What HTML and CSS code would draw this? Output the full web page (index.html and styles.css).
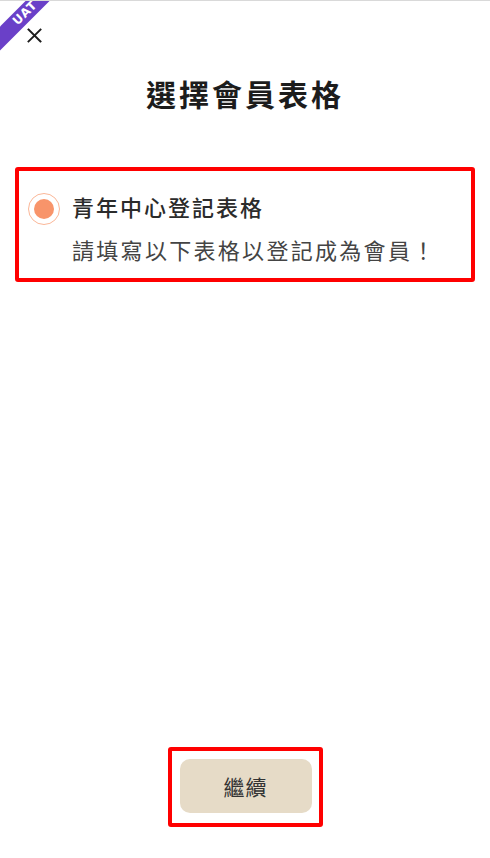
FILE: index.html
```html
<!DOCTYPE html>
<html lang="zh-Hant">
<head>
<meta charset="utf-8">
<title>選擇會員表格</title>
<link rel="stylesheet" href="styles.css">
</head>
<body>
<div class="page">
  <div class="ribbon"><span>UAT</span></div>
  <div class="topbar">
    <svg class="close" width="15" height="15" viewBox="0 0 15 15" aria-label="關閉">
      <path d="M1.5 1.5 L13.5 13.5 M13.5 1.5 L1.5 13.5" stroke="#1d1d1d" stroke-width="1.9" stroke-linecap="square" fill="none"/>
    </svg>
  </div>
  <h1 class="title">選擇會員表格</h1>
  <div class="card">
    <div class="option">
      <div class="radio"><div class="dot"></div></div>
      <div class="texts">
        <div class="opt-title">青年中心登記表格</div>
        <div class="opt-sub">請填寫以下表格以登記成為會員！</div>
      </div>
    </div>
  </div>
  <div class="spacer"></div>
  <div class="btn-wrap">
    <button class="btn">繼續</button>
  </div>
</div>
</body>
</html>
```

FILE: styles.css
```css
html, body {
  margin: 0;
  padding: 0;
  background: #fff;
}
body {
  font-family: "Noto Sans CJK TC", "Noto Sans", sans-serif;
  color: #222;
}
.page {
  position: relative;
  height: 858px;
  box-sizing: border-box;
  border-top: 1px solid #d9d9d9;
  display: flex;
  flex-direction: column;
  overflow: hidden;
}
.ribbon {
  position: absolute;
  left: -31px;
  top: 10px;
  width: 100px;
  height: 17px;
  background: #6a40c8;
  transform: rotate(-45deg);
  display: flex;
  align-items: center;
  justify-content: center;
  z-index: 2;
}
.ribbon span {
  color: #fff;
  font-family: "DejaVu Sans", sans-serif;
  font-weight: bold;
  font-size: 12px;
  line-height: 17px;
  letter-spacing: 1px;
  padding-left: 18px;
}
.topbar {
  height: 44px;
  padding: 27px 0 0 27px;
  box-sizing: border-box;
}
.close {
  display: block;
}
.title {
  margin: 28px 0 0;
  text-align: center;
  font-size: 30px;
  line-height: 40px;
  font-weight: 700;
  letter-spacing: 3px;
  color: #1c1c1c;
}
.card {
  margin: 54px 15px 0;
  border: 4px solid #ff0000;
  border-radius: 3px;
}
.option {
  display: flex;
  gap: 12px;
  padding: 20px 9px 14px;
}
.radio {
  margin-top: 2px;
  width: 32px;
  height: 32px;
  box-sizing: border-box;
  border: 1.5px solid #fbb798;
  border-radius: 50%;
  display: flex;
  align-items: center;
  justify-content: center;
  flex: none;
}
.dot {
  width: 20px;
  height: 20px;
  border-radius: 50%;
  background: #f8946a;
}
.texts {
  display: flex;
  flex-direction: column;
  gap: 13px;
}
.opt-title {
  font-size: 22px;
  line-height: 30px;
  font-weight: 500;
  letter-spacing: 2px;
  color: #2b2b2b;
}
.opt-sub {
  font-size: 22px;
  line-height: 30px;
  font-weight: 400;
  letter-spacing: 2.3px;
  color: #444;
}
.spacer {
  flex: 1;
}
.btn-wrap {
  align-self: center;
  border: 4px solid #ff0000;
  border-radius: 3px;
  padding: 8px 7px 10px 8px;
  margin-bottom: 31px;
}
.btn {
  display: block;
  width: 132px;
  height: 54px;
  border: none;
  border-radius: 10px;
  background: #e6dbc7;
  font-family: "Noto Sans CJK TC", sans-serif;
  font-size: 21px;
  letter-spacing: 1px;
  color: #333;
  padding: 0;
}
```
